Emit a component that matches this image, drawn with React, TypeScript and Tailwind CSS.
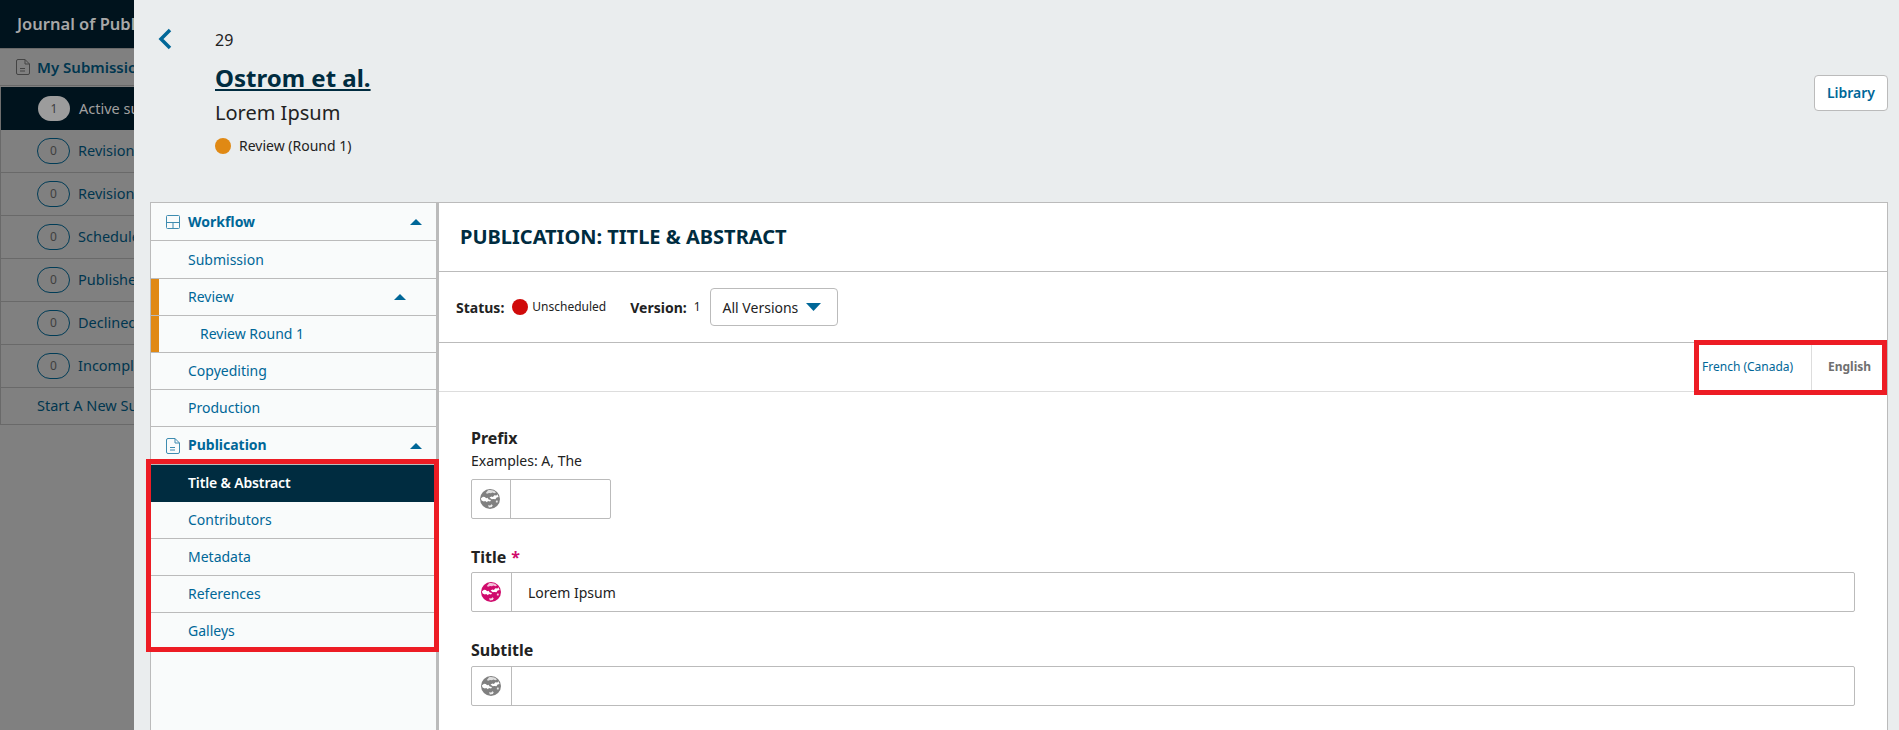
import React from "react";

const font = { fontFamily: '"Noto Sans", sans-serif' };

function Caret({ down = false, className = "" }: { down?: boolean; className?: string }) {
  return (
    <svg width="12" height="6" viewBox="0 0 12 6" preserveAspectRatio="none" className={className}>
      <path d={down ? "M0 0H12L6 6Z" : "M6 0L12 6H0Z"} fill="#006798" />
    </svg>
  );
}

function Globe({ color }: { color: string }) {
  return (
    <svg width="20" height="20" viewBox="0 0 20 20">
      <circle cx="10" cy="10" r="10" fill={color} />
      <path d="M8 1.200c3-.6 6 .2 8 2.200l-1.600.9-2-.9-1.500.9-1.800-.4-2 .9-1.300-.9Z" fill="#fff" opacity="0.75" />
      <path d="M.8 9.500l2.200-1.700 1.800.3 1.400 1.200 1.300-.6 1.200 1.700 2.300.6-.9 1.500-2.200-.4-.9 1.100-1.800-1.300-1.300.5-2.300-1Z" fill="#fff" />
      <path d="M9.500 8.500l2-1 1.400.4 1.400-1.700 2.200.3.900-1.200 1.200 2.700-2 .6-1.200 1.600-2.200-.2-1.400.3Z" fill="#fff" />
      <path d="M16 11.500l2 .3-.7 2-1.500-.5Z" fill="#fff" opacity="0.8" />
      <path d="M8 16.200l2.200.4 1.300-1.300 1.200.9-.8 1.800-3 .6Z" fill="#fff" opacity="0.85" />
    </svg>
  );
}

function SideRow({ n, label, active = false }: { n: number; label: string; active?: boolean }) {
  return (
    <div className={active ? "flex h-[43px] items-center border-l border-[#6e6e6e] bg-[#00131d] pl-[37px]" : "flex h-[43px] items-center border-b border-l border-[#696969] pl-[36px]"}>
      <span className={active ? "flex h-[25px] w-[32px] shrink-0 items-center justify-center rounded-full bg-[#9c9c9c] text-[12px] text-[#3c3c3c]" : "flex h-[26px] w-[33px] shrink-0 items-center justify-center rounded-full border border-[#003c57] text-[12px] text-[#3f3f3f]"}>{n}</span>
      <span className={active ? "ml-[9px] text-[14.5px] whitespace-nowrap text-[#a0a0a0]" : "ml-[8px] text-[14.5px] whitespace-nowrap text-[#00364f]"}>{label}</span>
    </div>
  );
}

function NavRow({ label, className = "h-[37px] pb-[2px] pl-[37px]", bold = false, icon, caretClass, bar = false, active = false }: { label: string; className?: string; bold?: boolean; icon?: React.ReactNode; caretClass?: string; bar?: boolean; active?: boolean }) {
  return (
    <div className={`relative flex items-center text-[14px] ${className} ${active ? "bg-[#002c40] font-semibold tracking-[-0.15px] text-white" : "border-b border-[#bbbbbb] text-[#006798]"} ${bold ? "font-bold" : ""}`}>
      {bar && <span className="absolute inset-y-0 left-0 w-2 bg-[#e08914]" />}
      {icon && <span className="absolute top-1/2 left-[15px] flex -translate-y-1/2">{icon}</span>}
      {label}
      {caretClass && <Caret className={`absolute top-1/2 -translate-y-1/2 ${caretClass}`} />}
    </div>
  );
}

function Field({ label, required = false, sub, inputClass, value, color = "#808080", dividerClass = "w-[40px]", wrapClass }: { label: string; required?: boolean; sub?: string; inputClass: string; value?: string; color?: string; dividerClass?: string; wrapClass: string }) {
  return (
    <div className={wrapClass}>
      <div className="text-[16px] leading-[22px] font-bold text-[#222222]">
        {label}
        {required && <span className="ml-[5px] text-[#d00a6c]">*</span>}
      </div>
      {sub && <div className="mt-[2px] text-[14px] leading-[20px] text-[#222222]">{sub}</div>}
      <div className={`flex h-[40px] items-stretch rounded-[2px] border border-[#bbbbbb] bg-white ${inputClass}`}>
        <div className={`flex shrink-0 items-center justify-center border-r border-[#bbbbbb] pr-[2px] ${dividerClass}`}>
          <Globe color={color} />
        </div>
        {value && <div className="flex items-center pl-[16px] text-[14px] text-[#222222]">{value}</div>}
      </div>
    </div>
  );
}

export default function App() {
  const TableIcon = (
    <svg width="14" height="14" viewBox="0 0 14 14" fill="none" stroke="#006798" strokeWidth="1" opacity="0.75">
      <rect x="0.5" y="0.5" width="13" height="13" rx="1" />
      <path d="M0.5 7.5H13.5M7 7.5V13.5" />
    </svg>
  );
  const FileIcon = (
    <svg width="14" height="16" viewBox="0 0 14 16" fill="none" stroke="#006798" strokeWidth="1" opacity="0.75">
      <path d="M0.5 2A1.5 1.5 0 0 1 2 .5H9L13.5 5V14A1.5 1.5 0 0 1 12 15.5H2A1.5 1.5 0 0 1 .5 14Z" />
      <path d="M9 .5V5h4.500M4 9.500h5M4 12h5" />
    </svg>
  );
  return (
    <div style={font} className="relative flex h-[730px] w-[1899px] overflow-hidden bg-[#eaedee]">
      <aside className="w-[134px] shrink-0 overflow-hidden bg-[#808080]">
        <div className="flex h-[48px] items-center bg-[#00131d] pl-[17px] text-[16.5px] font-semibold whitespace-nowrap text-[#a8a8a8]">Journal of Public Knowledge</div>
        <div className="flex h-[38px] items-center border-y border-[#696969] pl-[16px] text-[15px] font-semibold whitespace-nowrap text-[#00364f]">
          <svg width="14" height="16" viewBox="0 0 14 16" fill="none" stroke="#444" strokeWidth="1" className="mr-[7px] shrink-0">
            <path d="M.5 2A1.5 1.5 0 0 1 2 .5H9L13.5 5V14A1.5 1.5 0 0 1 12 15.5H2A1.5 1.5 0 0 1 .5 14Z" />
            <path d="M9 .5V5h4.500M4 9.500h5M4 12h5" />
          </svg>
          My Submissions
        </div>
        <div className="h-px" />
        <SideRow n={1} label="Active submissions" active />
        <SideRow n={0} label="Revisions requested" />
        <SideRow n={0} label="Revisions submitted" />
        <SideRow n={0} label="Scheduled" />
        <SideRow n={0} label="Published" />
        <SideRow n={0} label="Declined" />
        <SideRow n={0} label="Incomplete" />
        <div className="flex h-[37px] items-center border-b border-l border-[#696969] pl-[36px] text-[14.5px] whitespace-nowrap text-[#00364f]">Start A New Submission</div>
      </aside>

      <main className="min-w-0 flex-1 pr-[11px] pl-[16px]">
        <header className="flex h-[202px] items-start">
          <svg width="14" height="22" viewBox="0 0 14 22" fill="none" stroke="#006798" strokeWidth="3.5" className="mt-[28px] ml-[8px]">
            <path d="M12 2L3 11l9 9" />
          </svg>
          <div className="ml-[43px] flex-1 pt-[30px]">
            <div className="text-[16px] leading-[20px] text-[#222222]">29</div>
            <div className="mt-[11px] text-[24px] leading-[33px] font-bold text-[#002c40] underline">Ostrom et al.</div>
            <div className="mt-[5px] text-[20px] leading-[28px] text-[#222222]">Lorem Ipsum</div>
            <div className="mt-[9px] flex items-center text-[14px] leading-[20px] text-[#222222]">
              <span className="mr-[8px] h-4 w-4 rounded-full bg-[#e08914]" />
              Review (Round 1)
            </div>
          </div>
          <button className="mt-[75px] h-[36px] w-[74px] rounded-[4px] border border-[#bbbbbb] bg-white pb-px text-[14px] font-semibold text-[#006798]">Library</button>
        </header>

        <section className="flex h-[600px] border-t border-[#bbbbbb]">
          <nav className="w-[289px] shrink-0 border-r-[3px] border-l border-[#bbbbbb] bg-[#f9fbfb]">
            <NavRow label="Workflow" className="h-[38px] pl-[37px]" bold icon={TableIcon} caretClass="right-[14px]" />
            <NavRow label="Submission" className="h-[38px] pl-[37px]" />
            <NavRow label="Review" bar caretClass="right-[30px]" />
            <NavRow label="Review Round 1" className="h-[37px] pb-[2px] pl-[49px]" bar />
            <NavRow label="Copyediting" />
            <NavRow label="Production" />
            <NavRow label="Publication" className="h-[38px] pb-[2px] pl-[37px]" bold icon={FileIcon} caretClass="right-[14px]" />
            <NavRow label="Title & Abstract" active />
            <NavRow label="Contributors" />
            <NavRow label="Metadata" />
            <NavRow label="References" />
            <div className="flex h-[37px] items-center pb-[2px] pl-[37px] text-[14px] text-[#006798]">Galleys</div>
          </nav>

          <div className="min-w-0 flex-1 border-r border-[#bbbbbb] bg-white">
            <div className="flex h-[69px] items-center border-b border-[#bbbbbb] pb-px pl-[21px] text-[20px] font-bold text-[#002c40] uppercase">Publication: Title &amp; Abstract</div>
            <div className="flex h-[71px] items-center border-b border-[#bbbbbb] pl-[17px] text-[#222222]">
              <span className="text-[14px] font-bold">Status:</span>
              <span className="ml-[8px] h-4 w-4 rounded-full bg-[#d00a0a]" />
              <span className="ml-[4px] text-[12px]">Unscheduled</span>
              <span className="ml-[24px] text-[14px] font-bold">Version:</span>
              <span className="ml-[7px] text-[12px]">1</span>
              <div className="ml-[9px] flex h-[38px] w-[128px] items-center rounded-[4px] border border-[#bbbbbb] pl-[12px] text-[14px]">
                All Versions
                <Caret down className="ml-2 h-[8px] w-[15px]" />
              </div>
            </div>
            <div className="flex h-[49px] justify-end border-b border-[#dddddd] text-[12px]">
              <div className="flex w-[117px] items-center pl-[8px] text-[#006798]">French (Canada)</div>
              <div className="flex w-[76px] items-center border-l border-[#dddddd] pl-[16px] font-bold text-[#707070]">English</div>
            </div>
            <div className="px-[32px]">
              <Field label="Prefix" sub="Examples: A, The" wrapClass="pt-[35px]" inputClass="mt-[8px] w-[140px]" dividerClass="w-[39px]" />
              <Field label="Title" required wrapClass="mt-[27px]" inputClass="mt-[4px]" value="Lorem Ipsum" color="#d00a6c" />
              <Field label="Subtitle" wrapClass="mt-[27px]" inputClass="mt-[5px]" />
            </div>
          </div>
        </section>
      </main>

      <div className="pointer-events-none absolute top-[459px] left-[146px] h-[193px] w-[293px] border-[5px] border-[#ed1c24]" />
      <div className="pointer-events-none absolute top-[340px] left-[1694px] h-[55px] w-[193px] border-[5px] border-[#ed1c24]" />
    </div>
  );
}
